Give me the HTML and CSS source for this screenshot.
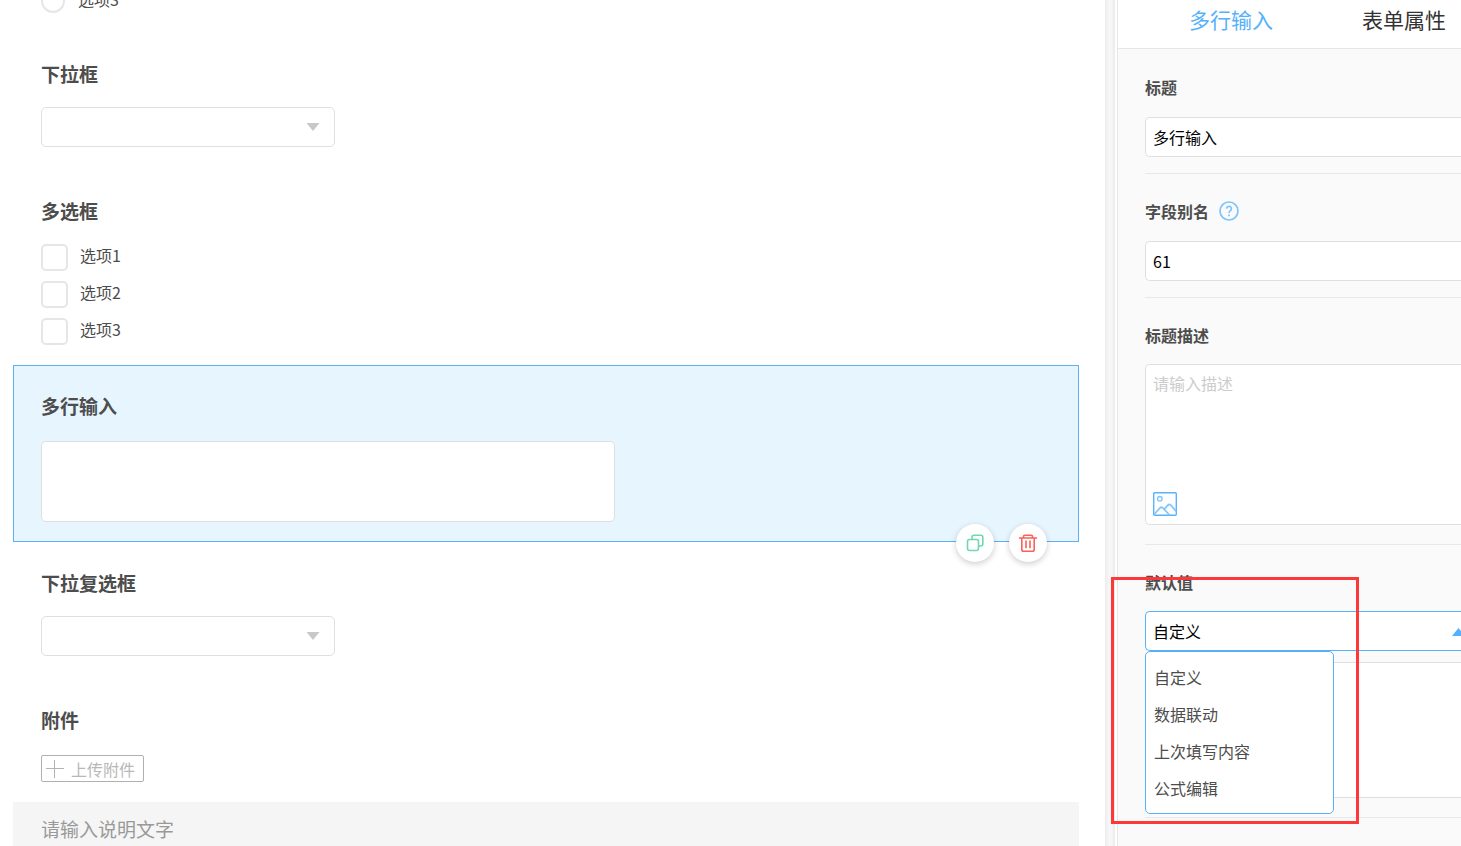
FILE: index.html
```
<!DOCTYPE html>
<html lang="zh-CN">
<head>
    <meta charset="UTF-8">
    <meta name="viewport" content="width=device-width, initial-scale=1.0">
    <title>表单设计</title>
    <link rel="stylesheet" href="styles.css">
</head>
<body>
<div class="designer">

    <!-- Form canvas -->
    <main class="canvas">
        <section class="field field-first">
            <label class="choice radio-choice">
                <input type="radio" name="radio-field">
                <span>选项3</span>
            </label>
        </section>

        <section class="field">
            <label class="field-title" for="select-field">下拉框</label>
            <div class="select-box">
                <select id="select-field"><option value=""></option></select>
                <svg class="arrow" width="14" height="8" viewBox="0 0 14 8"><path d="M0.5 0h13L7 8z" fill="#c8c8c8"/></svg>
            </div>
        </section>

        <section class="field">
            <h3 class="field-title">多选框</h3>
            <div class="choices">
                <label class="choice"><input type="checkbox"><span>选项1</span></label>
                <label class="choice"><input type="checkbox"><span>选项2</span></label>
                <label class="choice"><input type="checkbox"><span>选项3</span></label>
            </div>
        </section>

        <section class="field selected">
            <label class="field-title" for="multi-field">多行输入</label>
            <textarea class="multi-input" id="multi-field"></textarea>
            <div class="field-tools">
                <button type="button" class="tool-btn" aria-label="复制">
                    <svg width="18" height="18" viewBox="0 0 18 18" fill="none" stroke="#6fd8b0" stroke-width="1.6">
                        <rect x="1.5" y="5.5" width="11" height="11" rx="2"/>
                        <path d="M6 5.5V3.2a2 2 0 0 1 2-2h6.8a2 2 0 0 1 2 2V10a2 2 0 0 1-2 2h-2.3"/>
                    </svg>
                </button>
                <button type="button" class="tool-btn" aria-label="删除">
                    <svg width="18" height="18" viewBox="0 0 18 18" fill="none" stroke="#fc6057" stroke-width="1.6">
                        <path d="M0 4h18M4.5 4V2.6a1.4 1.4 0 0 1 1.4-1.4h6.2a1.4 1.4 0 0 1 1.4 1.4V4"/>
                        <path d="M2.8 4v11.4a1.8 1.8 0 0 0 1.8 1.8h8.8a1.8 1.8 0 0 0 1.8-1.8V4M7 6.5v7.8M11 6.5v7.8"/>
                    </svg>
                </button>
            </div>
        </section>

        <section class="field">
            <label class="field-title" for="multi-select-field">下拉复选框</label>
            <div class="select-box">
                <select id="multi-select-field"><option value=""></option></select>
                <svg class="arrow" width="14" height="8" viewBox="0 0 14 8"><path d="M0.5 0h13L7 8z" fill="#c8c8c8"/></svg>
            </div>
        </section>

        <section class="field">
            <h3 class="field-title">附件</h3>
            <button type="button" class="upload-btn">
                <svg width="18" height="18" viewBox="0 0 18 18" stroke="#b3b3b3" stroke-width="1"><path d="M0 8.5h18M8.5 0v18"/></svg>
                上传附件
            </button>
        </section>

        <p class="note">请输入说明文字</p>
    </main>

    <div class="divider-bar"></div>

    <!-- Property panel -->
    <aside class="panel">
        <nav class="tabs">
            <button type="button" class="tab active">多行输入</button>
            <button type="button" class="tab">表单属性</button>
        </nav>

        <div class="panel-body">
            <div class="prop">
                <label class="prop-title" for="prop-name">标题</label>
                <input type="text" class="prop-input" id="prop-name" value="多行输入">
            </div>

            <div class="prop">
                <label class="prop-title" for="prop-alias">字段别名
                    <svg width="20" height="20" viewBox="0 0 20 20" fill="none" stroke="#7cc4fb" stroke-width="1.7">
                        <circle cx="10" cy="10" r="9"/>
                        <path d="M7.6 7.6a2.4 2.4 0 1 1 3.9 2c-.9.7-1.5 1.1-1.5 2.4M10 13.4v1.8"/>
                    </svg>
                </label>
                <input type="text" class="prop-input" id="prop-alias" value="61">
            </div>

            <div class="prop prop-tall">
                <label class="prop-title" for="prop-desc">标题描述</label>
                <div class="desc-box">
                    <textarea class="prop-input desc-input" id="prop-desc" placeholder="请输入描述"></textarea>
                    <button type="button" class="image-btn" aria-label="插入图片">
                        <svg width="24" height="24" viewBox="0 0 24 24" fill="none" stroke="#5bb2f9" stroke-width="1.4">
                            <rect x="0.7" y="0.7" width="22.6" height="22.6" rx="1"/>
                            <circle cx="6.8" cy="6.8" r="2.3" stroke="#84c6fb"/>
                            <path d="M1 22.5l6-6.6q1.4-1.3 2.8 0l6.8 7.1M11.8 16.6l3-3.4q1.6-1.3 3 0l5.4 6.2" stroke="#84c6fb" stroke-width="1.8"/>
                        </svg>
                    </button>
                </div>
            </div>

            <div class="prop prop-tall">
                <label class="prop-title" for="prop-default">默认值</label>
                <div class="default-box">
                    <select class="prop-input open" id="prop-default"><option>自定义</option></select>
                    <svg class="arrow-up" width="9" height="8" viewBox="0 0 9 8"><path d="M0 8l6.5-8L13 8z" fill="#56b1fc"/></svg>
                    <ul class="menu">
                        <li><button type="button">自定义</button></li>
                        <li><button type="button">数据联动</button></li>
                        <li><button type="button">上次填写内容</button></li>
                        <li><button type="button">公式编辑</button></li>
                    </ul>
                </div>
                <textarea class="prop-input default-input" aria-label="默认内容"></textarea>
                <div class="highlight"></div>
            </div>
        </div>
    </aside>

</div>
</body>
</html>
```
FILE: styles.css
```
* {
    box-sizing: border-box;
}

body {
    margin: 0;
    background: #fff;
    color: #4d4d4d;
    font-family: "Noto Sans CJK SC", sans-serif;
    font-size: 16px;
    overflow: hidden;
}

button, input, select, textarea {
    font: inherit;
    color: inherit;
    outline: none;
}

button {
    padding: 0;
    border: none;
    background: none;
    cursor: pointer;
}

svg {
    display: block;
}

.designer {
    display: flex;
    height: 100vh;
}

/* Form canvas */
.canvas {
    flex: 1;
    padding: 0 26px 0 13px;
    overflow: hidden;
}

.field {
    position: relative;
    padding: 27px 27px 19px;
    border: 1px solid transparent;
}

.field-first {
    margin-top: -12px;
    padding-top: 0;
}

.field.selected {
    background: #e7f5fe;
    border-color: #5cb0f5;
}

.field-title {
    display: block;
    margin: 0 0 20px;
    font-size: 19px;
    font-weight: bold;
    line-height: 26px;
}

.select-box {
    position: relative;
    width: 294px;
    margin-bottom: 3px;
}

.select-box select {
    display: block;
    width: 100%;
    height: 40px;
    border: 1px solid #dfdfdf;
    border-radius: 5px;
    background: #fff;
    appearance: none;
}

.arrow {
    position: absolute;
    top: 16px;
    right: 15px;
    pointer-events: none;
}

.choices {
    display: flex;
    flex-direction: column;
    gap: 10px;
}

.choice {
    display: flex;
    gap: 12px;
    line-height: 22px;
}

.choice input {
    width: 27px;
    height: 27px;
    margin: 0;
    border: 2px solid #e6e6e6;
    border-radius: 5px;
    background: #fff;
    appearance: none;
}

.radio-choice {
    gap: 13px;
    line-height: 20px;
}

.radio-choice input {
    width: 24px;
    height: 24px;
    border-radius: 50%;
}

.multi-input {
    display: block;
    width: 574px;
    height: 81px;
    margin-top: 22px;
    border: 1px solid #dfdfdf;
    border-radius: 5px;
    background: #fff;
    resize: none;
}

.field-tools {
    position: absolute;
    right: 31px;
    bottom: -21px;
    z-index: 1;
    display: flex;
    gap: 15px;
}

.tool-btn {
    display: flex;
    align-items: center;
    justify-content: center;
    width: 38px;
    height: 38px;
    border-radius: 50%;
    background: #fff;
    box-shadow: 0 2px 6px rgba(0, 0, 0, 0.2);
}

.upload-btn {
    display: flex;
    align-items: center;
    gap: 7px;
    height: 27px;
    margin-top: 22px;
    padding: 0 8px 0 4px;
    border: 1px solid #b0b0b0;
    border-radius: 2px;
    color: #b8b8b8;
    line-height: 24px;
}

.note {
    margin: 0;
    padding: 14px 28px 20px;
    background: #f5f5f5;
    color: #999;
    font-size: 19px;
    line-height: 26px;
}

.divider-bar {
    flex: 0 0 10px;
    margin-right: 2px;
    background: linear-gradient(to right, #ececec, #f6f6f6 40%, #f6f6f6 70%, #e9e9e9);
}

/* Property panel */
.panel {
    flex: 0 0 344px;
    border-left: 1px solid #e6e6e6;
    background: #fafafa;
}

.tabs {
    display: flex;
    gap: 89px;
    height: 49px;
    padding: 0 0 10px 71px;
    border-bottom: 1px solid #e6e6e6;
    background: #fff;
}

.tab {
    flex: none;
    color: #333;
    font-size: 21px;
    line-height: 38px;
}

.tab.active {
    color: #56b1fc;
}

.panel-body {
    padding: 1px 0 0 27px;
}

.prop {
    position: relative;
    padding: 25px 0 16px;
    border-bottom: 1px solid #e8e8e8;
}

.prop-title {
    display: flex;
    align-items: center;
    gap: 10px;
    margin-bottom: 18px;
    font-weight: bold;
    line-height: 24px;
}

.prop-tall {
    padding-bottom: 19px;
}

.prop-tall .prop-title {
    margin-bottom: 17px;
}

.prop-input {
    display: block;
    width: 100%;
    height: 40px;
    padding: 0 7px;
    border: 1px solid #dfdfdf;
    border-right: none;
    border-radius: 5px 0 0 5px;
    background: #fff;
    color: #000;
    appearance: none;
    resize: none;
}

.desc-box, .default-box {
    position: relative;
}

.desc-input {
    height: 161px;
    padding-top: 7px;
    line-height: 22px;
}

.desc-input::placeholder {
    color: #ccc;
}

.image-btn {
    position: absolute;
    left: 8px;
    bottom: 9px;
}

.prop-input.open {
    border-color: #56b1fc;
}

.arrow-up {
    position: absolute;
    top: 17px;
    right: 0;
    pointer-events: none;
}

/* Open list under the default value select */
.menu {
    position: absolute;
    top: 100%;
    left: 0;
    z-index: 1;
    width: 189px;
    margin: 0;
    padding: 7px 0 6px;
    border: 1px solid #56b1fc;
    border-radius: 5px;
    background: #fff;
    list-style: none;
}

.menu button {
    display: block;
    width: 100%;
    padding: 0 8px;
    line-height: 37px;
    text-align: left;
}

.default-input {
    height: 136px;
    margin-top: 11px;
}

/* Callout frame round the default value */
.highlight {
    position: absolute;
    top: 32px;
    left: -34px;
    z-index: 2;
    width: 248px;
    height: 247px;
    border: 3px solid #fd3838;
    pointer-events: none;
}
```
